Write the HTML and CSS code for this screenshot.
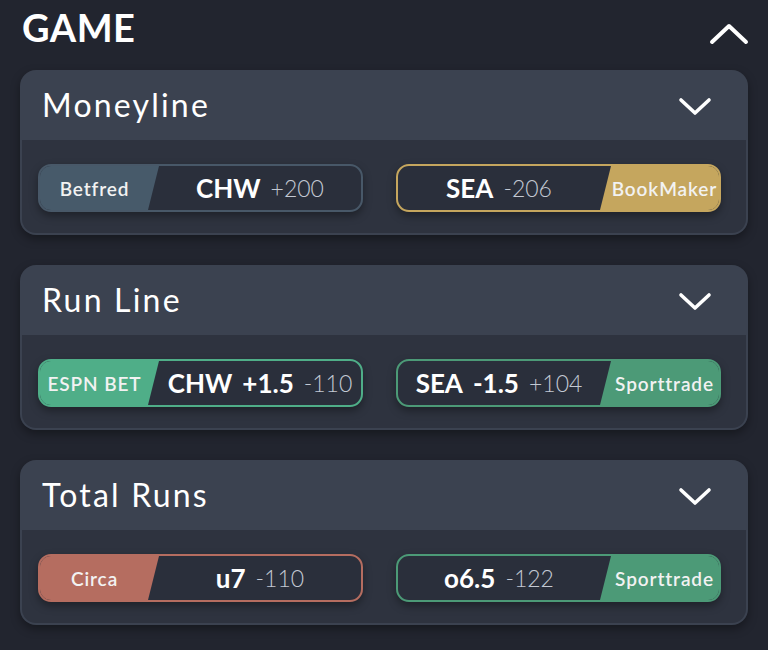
FILE: index.html
```html
<!DOCTYPE html>
<html>
<head>
<meta charset="utf-8">
<link rel="stylesheet" href="styles.css">
</head>
<body>
<div class="page">
  <div class="section-head">
    <span class="section-title">GAME</span>
    <svg class="chev-up" width="40" height="24" viewBox="0 0 40 24"><path d="M3 20 L20 4 L37 20" fill="none" stroke="#fff" stroke-width="4" stroke-linecap="round" stroke-linejoin="round"/></svg>
  </div>

  <div class="card">
    <div class="card-head">
      <span class="card-title">Moneyline</span>
      <svg class="chev" width="34" height="20" viewBox="0 0 34 20"><path d="M3 4 L17 17 L31 4" fill="none" stroke="#fff" stroke-width="3.6" stroke-linecap="round" stroke-linejoin="round"/></svg>
    </div>
    <div class="card-body">
      <div class="pill b-betfred">
        <div class="label label-left">Betfred</div>
        <div class="main"><span class="team">CHW</span><span class="odds">+200</span></div>
      </div>
      <div class="pill b-bookmaker">
        <div class="main"><span class="team">SEA</span><span class="odds">-206</span></div>
        <div class="label label-right">BookMaker</div>
      </div>
    </div>
  </div>

  <div class="card">
    <div class="card-head">
      <span class="card-title">Run Line</span>
      <svg class="chev" width="34" height="20" viewBox="0 0 34 20"><path d="M3 4 L17 17 L31 4" fill="none" stroke="#fff" stroke-width="3.6" stroke-linecap="round" stroke-linejoin="round"/></svg>
    </div>
    <div class="card-body">
      <div class="pill b-espn">
        <div class="label label-left">ESPN BET</div>
        <div class="main"><span class="team">CHW</span><span class="team">+1.5</span><span class="odds">-110</span></div>
      </div>
      <div class="pill b-sporttrade">
        <div class="main"><span class="team">SEA</span><span class="team">-1.5</span><span class="odds">+104</span></div>
        <div class="label label-right">Sporttrade</div>
      </div>
    </div>
  </div>

  <div class="card">
    <div class="card-head">
      <span class="card-title">Total Runs</span>
      <svg class="chev" width="34" height="20" viewBox="0 0 34 20"><path d="M3 4 L17 17 L31 4" fill="none" stroke="#fff" stroke-width="3.6" stroke-linecap="round" stroke-linejoin="round"/></svg>
    </div>
    <div class="card-body">
      <div class="pill b-circa">
        <div class="label label-left">Circa</div>
        <div class="main"><span class="team">u7</span><span class="odds">-110</span></div>
      </div>
      <div class="pill b-sporttrade">
        <div class="main"><span class="team">o6.5</span><span class="odds">-122</span></div>
        <div class="label label-right">Sporttrade</div>
      </div>
    </div>
  </div>
</div>
</body>
</html>
```

FILE: styles.css
```css
* { box-sizing: border-box; }
html, body {
  margin: 0;
  padding: 0;
  background: #22252f;
  font-family: "Lato", "Open Sans", sans-serif;
  color: #fff;
}
.page {
  width: 768px;
  height: 650px;
  overflow: hidden;
  padding: 0 20px;
}
.section-head {
  height: 70px;
  display: flex;
  align-items: flex-start;
  justify-content: space-between;
  padding: 7px 0 0 2px;
}
.section-title {
  font-size: 38px;
  font-weight: 700;
  letter-spacing: 0.5px;
  line-height: 40px;
}
.chev-up {
  margin-top: 15px;
  margin-right: -1px;
}
.card {
  background: #3b4250;
  border-radius: 16px;
  padding: 0 2px 2px 2px;
  margin-bottom: 30px;
  box-shadow: 0 4px 10px rgba(0,0,0,0.35);
}
.card-head {
  height: 70px;
  display: flex;
  align-items: center;
  justify-content: space-between;
  padding: 0 34px 0 20px;
}
.card-title {
  font-size: 32px;
  font-weight: 400;
  letter-spacing: 2.2px;
  margin-top: -2px;
}
.chev { margin-top: 2px; }
.card-body {
  background: #2e333f;
  border-radius: 0 0 14px 14px;
  display: flex;
  gap: 33px;
  padding: 24px 25px 21px 16px;
}
.pill {
  flex: 1;
  height: 48px;
  border: 2px solid;
  border-radius: 13px;
  background: #2a2f3b;
  display: flex;
  overflow: hidden;
  box-shadow: 0 4px 8px rgba(0,0,0,0.35);
}
.label {
  height: 100%;
  display: flex;
  align-items: center;
  justify-content: center;
  font-size: 19px;
  font-weight: 600;
  letter-spacing: 0.9px;
  color: #f2f2f2;
  flex: none;
}
.label-left {
  width: 119px;
  padding-right: 10px;
  clip-path: polygon(0 0, 100% 0, calc(100% - 11px) 100%, 0 100%);
}
.label-right {
  width: 119px;
  padding-left: 10px;
  clip-path: polygon(11px 0, 100% 0, 100% 100%, 0 100%);
}
.main {
  flex: 1;
  display: flex;
  align-items: center;
  justify-content: center;
  gap: 10px;
}
.team {
  font-size: 26px;
  font-weight: 700;
  color: #fff;
}
.odds {
  font-size: 23px;
  font-weight: 300;
  color: #c3c9d3;
}
.b-betfred { border-color: #485868; }
.b-betfred .label { background: #475a6a; }
.b-bookmaker { border-color: #c5a65e; }
.b-bookmaker .label { background: #c5a65e; }
.b-espn { border-color: #4fae88; }
.b-espn .label { background: #4fae88; }
.b-sporttrade { border-color: #4c9a77; }
.b-sporttrade .label { background: #4c9a77; }
.b-circa { border-color: #b56d60; }
.b-circa .label { background: #b56d60; }
```
